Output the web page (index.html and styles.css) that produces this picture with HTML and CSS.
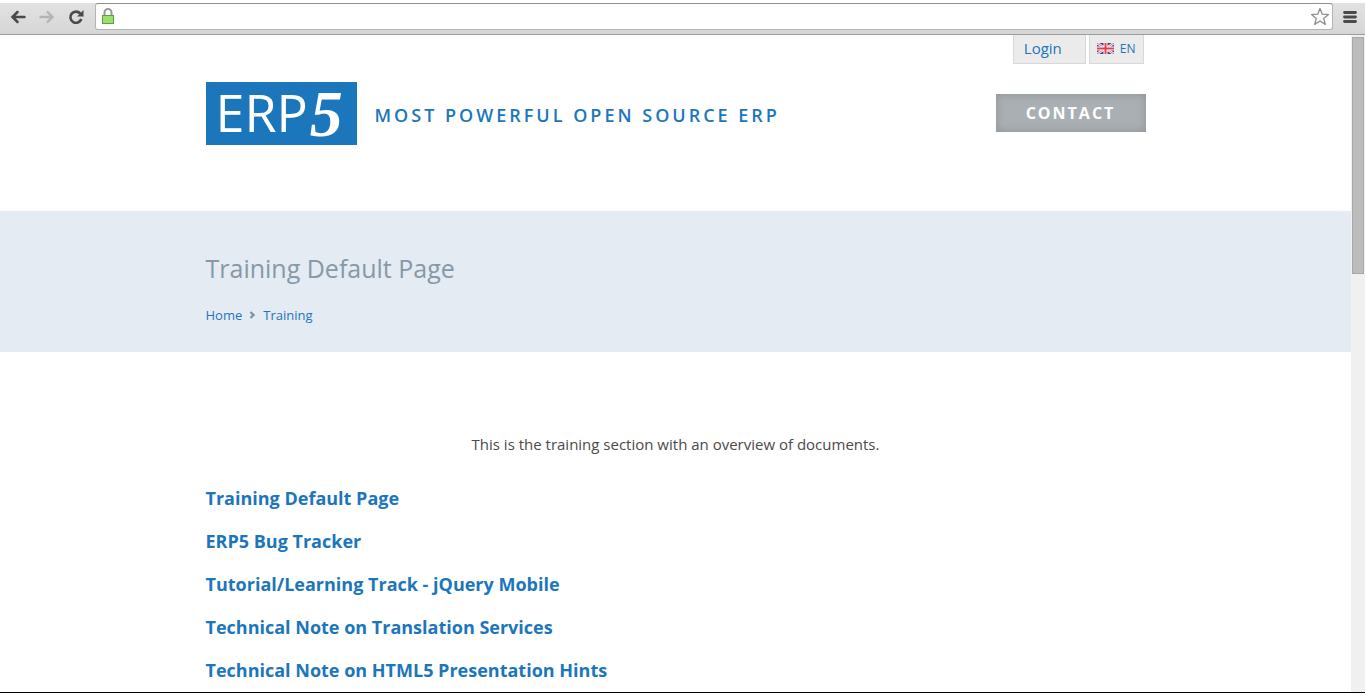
FILE: index.html
```html
<!DOCTYPE html>
<html lang="en">
<head>
<meta charset="utf-8">
<title>Training Default Page</title>
<link rel="stylesheet" href="styles.css">
</head>
<body>
<div class="toolbar">
  <button class="tool" aria-label="Back"><svg width="18" height="16" viewBox="0 0 18 16"><path d="M8.500 3 3.500 8l5 5M4 8H15.500" fill="none" stroke="#4a4a4a" stroke-width="2.500" stroke-linecap="round"/></svg></button>
  <button class="tool" aria-label="Forward"><svg width="18" height="16" viewBox="0 0 18 16"><path d="M9.500 3 14.500 8l-5 5M14 8H2.500" fill="none" stroke="#b4b4b4" stroke-width="2.400" stroke-linecap="round"/></svg></button>
  <button class="tool" aria-label="Reload"><svg width="18" height="16" viewBox="0 0 18 16"><path d="M13.300 4.600A5.600 5.600 0 1 0 14.300 10" fill="none" stroke="#4a4a4a" stroke-width="2.600"/><path d="M16.500 1v6.500H10z" fill="#4a4a4a"/></svg></button>
  <div class="address">
    <svg width="12" height="17" viewBox="0 0 12 17"><path d="M2.500 8V4.500a3.500 3.500 0 0 1 7 0V8" fill="none" stroke="#999" stroke-width="2"/><rect x=".5" y="7.500" width="11" height="8" fill="#9ade6e" stroke="#5aa23c"/></svg>
    <input class="url" type="text" aria-label="Address">
    <svg width="20" height="19" viewBox="0 0 20 19"><path d="m10 1.500 2.300 5.700 6.200.4-4.800 3.800 1.600 6L10 14l-5.300 3.400 1.600-6L1.500 7.600l6.200-.4z" fill="#fff" stroke="#8c8c8c" stroke-width="1.300" stroke-linejoin="round"/></svg>
  </div>
  <button class="tool menu" aria-label="Menu"><svg width="14" height="14" viewBox="0 0 14 14"><path d="M1.500 2.500h11M1.500 7h11M1.500 11.500h11" stroke="#4a4a4a" stroke-width="2.800" stroke-linecap="round"/></svg></button>
</div>
<div class="viewport">
  <div class="page">
    <header class="wrap">
      <nav class="account">
        <a class="tab login" href="#">Login</a>
        <a class="tab language" href="#"><svg width="17" height="11" viewBox="0 0 17 11"><path fill="#35408e" d="M0 0h17v11H0z"/><path d="m0 0 17 11M17 0 0 11" stroke="#fff" stroke-width="2.400"/><path d="m0 0 17 11M17 0 0 11" stroke="#e0525e" stroke-width=".9"/><path d="M8.500 0v11M0 5.500h17" stroke="#fff" stroke-width="4"/><path d="M8.500 0v11M0 5.500h17" stroke="#e0404c" stroke-width="2"/></svg>EN</a>
      </nav>
      <div class="brand">
        <a class="logo" href="#">ERP<span class="five">5</span></a>
        <span class="tagline">MOST POWERFUL OPEN SOURCE ERP</span>
        <a class="contact" href="#">CONTACT</a>
      </div>
    </header>
    <section class="banner">
      <div class="wrap">
        <h1 class="title">Training Default Page</h1>
        <nav class="crumbs"><a href="#">Home</a><svg width="7" height="8" viewBox="0 0 7 8"><path d="m1.500 1 3 3-3 3" fill="none" stroke="#8095a5" stroke-width="2.400"/></svg><a href="#">Training</a></nav>
      </div>
    </section>
    <main class="wrap content">
      <p class="intro">This is the training section with an overview of documents.</p>
      <ul class="documents">
        <li><a href="#">Training Default Page</a></li>
        <li><a href="#">ERP5 Bug Tracker</a></li>
        <li><a href="#">Tutorial/Learning Track - jQuery Mobile</a></li>
        <li><a href="#">Technical Note on Translation Services</a></li>
        <li><a href="#">Technical Note on HTML5 Presentation Hints</a></li>
      </ul>
    </main>
  </div>
  <div class="scrollbar"><div class="thumb"></div></div>
</div>
</body>
</html>
```
FILE: styles.css
```css
* { box-sizing: border-box; }
body {
  margin: 0;
  padding: 3px 1px 3px 0;
  height: 100vh;
  display: flex;
  flex-direction: column;
  overflow: hidden;
  background: #fff;
  color: #4a4a4a;
  font-family: "Open Sans", sans-serif;
}
a { color: #1c76bc; text-decoration: none; }
.toolbar {
  display: flex;
  flex: none;
  align-items: center;
  gap: 11px;
  height: 32px;
  padding: 0 8px 4px 9px;
  background: linear-gradient(#e2e2e2, #d6d6d6);
  border-bottom: 1px solid #9c9c9c;
}
.tool { display: flex; padding: 0; border: 0; background: none; }
.address {
  display: flex;
  flex: 1;
  align-items: center;
  height: 27px;
  margin: 0 -1px;
  padding: 0 2px 0 6px;
  background: #fff;
  border: 1px solid #b4b4b4;
  border-top-color: #909090;
  border-radius: 3px;
}
.url { flex: 1; min-width: 0; border: 0; outline: 0; background: none; }
.viewport { display: flex; flex: 1; min-height: 0; border-bottom: 1px solid #000; }
.page { flex: 1; overflow: hidden; }
.wrap { max-width: 940px; margin: 0 auto; }
.account { display: flex; justify-content: flex-end; gap: 3px; padding-right: 2px; }
.tab {
  display: flex;
  align-items: center;
  height: 29px;
  padding-bottom: 1px;
  border: 1px solid #d8d8d8;
  border-top: 0;
  background: #ebebeb;
}
.login { padding: 0 23px 2px 10px; font-size: 15px; line-height: 20px; }
.language { gap: 6px; padding-left: 7px; padding-right: 7px; font-size: 12px; }
.brand { display: flex; align-items: flex-start; padding: 18px 0 63px; }
.logo {
  display: flex;
  align-items: flex-start;
  width: 151px;
  height: 63px;
  padding-left: 10px;
  background: #1c76bc;
  color: #fff;
  font-size: 52px;
  line-height: 60px;
}
.five { padding-left: 2px; font: italic bold 66px/63px "Liberation Serif", serif; }
.tagline { padding-left: 18px; color: #1c76bc; font-size: 18px; font-weight: 600; letter-spacing: 3px; line-height: 66px; }
.contact {
  width: 150px;
  height: 38px;
  margin: 12px 0 0 auto;
  background: #a9afb3;
  box-shadow: inset 0 0 8px #8c9296;
  color: #fff;
  font-size: 16px;
  font-weight: 700;
  letter-spacing: 2px;
  line-height: 38px;
  text-align: center;
}
.banner { height: 141px; padding-top: 39px; background: #e4ebf2; }
.title { margin: 0; color: #8599a9; font-size: 25px; font-weight: 400; line-height: 36px; }
.crumbs { display: flex; align-items: center; gap: 7px; padding-top: 19px; font-size: 13px; line-height: 20px; }
.content { padding-top: 81px; }
.intro { margin: 0; font-size: 15px; line-height: 22px; text-align: center; }
.documents { margin: 0; padding: 31px 0 0; list-style: none; font-size: 18px; font-weight: 700; line-height: 24px; }
.documents li { padding-bottom: 19px; }
.scrollbar { flex: none; width: 14px; padding: 2px 1px; background: #f0f0f0; }
.thumb { height: 237px; background: #bcbcbc; border: 1px solid #a8a8a8; }
```
